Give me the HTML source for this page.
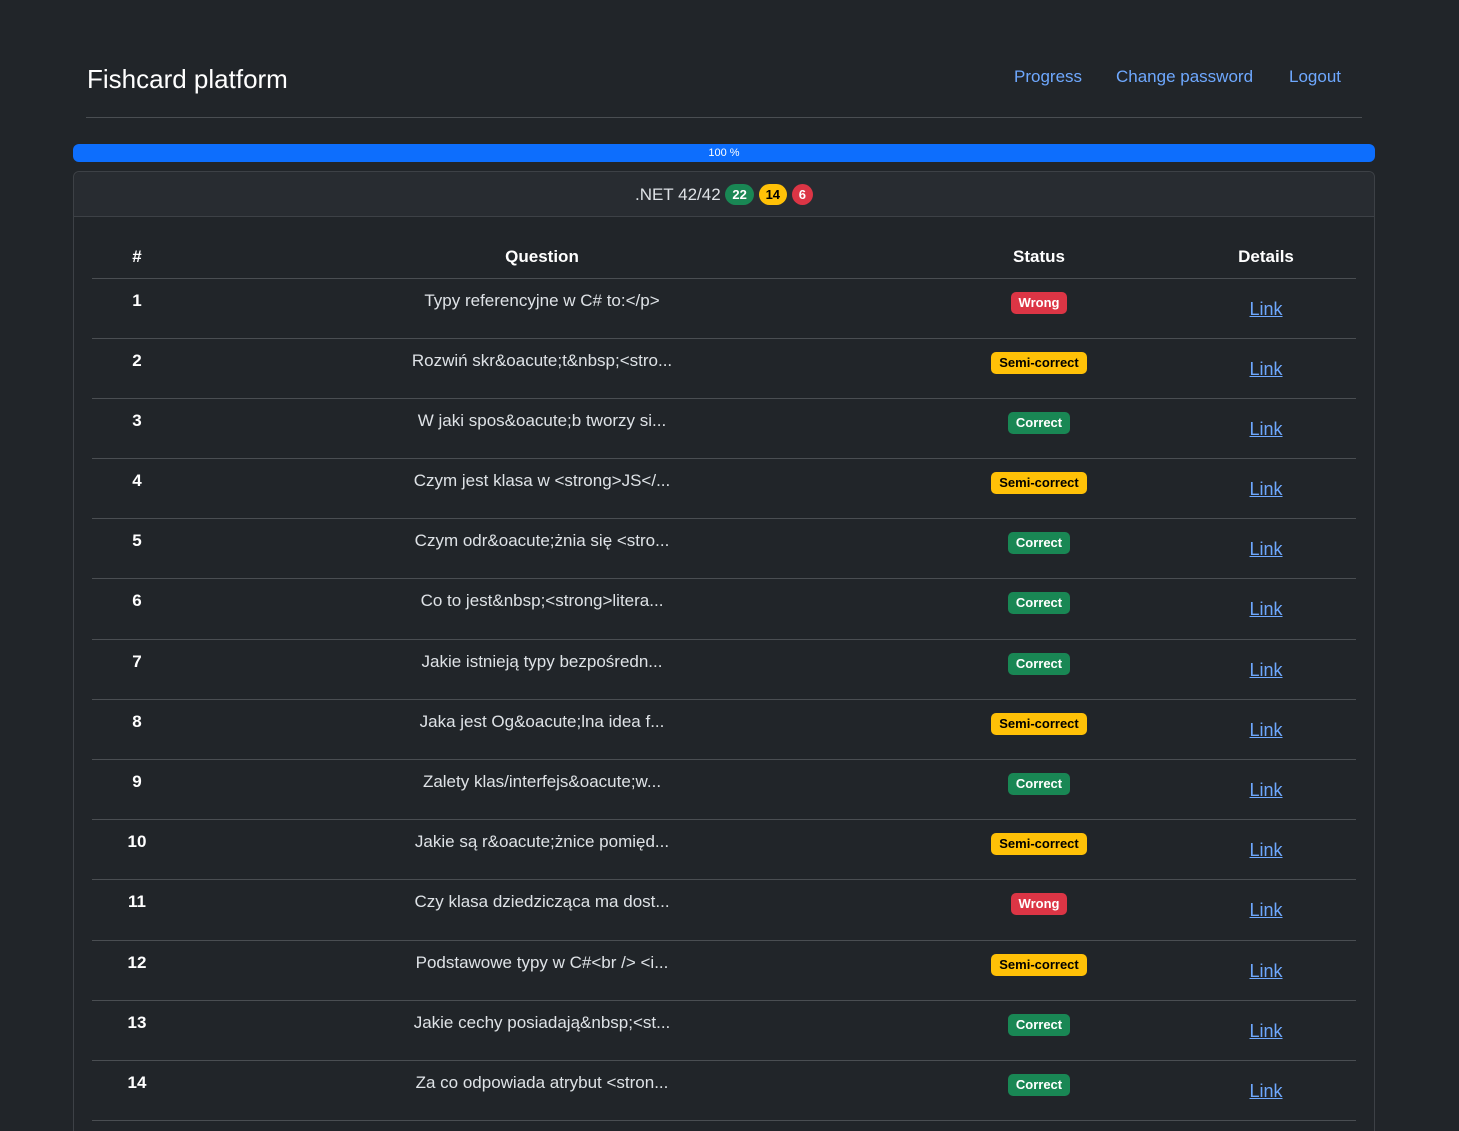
<!DOCTYPE html>
<html><head><meta charset="utf-8"><style>
*{box-sizing:border-box;margin:0;padding:0}
html,body{width:1459px;height:1131px;overflow:hidden}
body{background:#212529;color:#dee2e6;font-family:"Liberation Sans",sans-serif;position:relative}
.title{position:absolute;left:87px;top:64px;font-size:26px;color:#fff}
.nav a{position:absolute;top:67px;font-size:17px;color:#6ea8fe;text-decoration:none}
.hr{position:absolute;left:86px;width:1276px;top:117px;height:1px;background:#4a4e52}
.prog{position:absolute;left:73px;width:1302px;top:144px;height:18px;background:#0d6efd;border-radius:6px;color:#fff;font-size:11px;text-align:center;line-height:19px}
.card{position:absolute;left:73px;width:1302px;top:171px;height:1000px;border:1px solid #3d4146;border-radius:6px;background:#212529;overflow:hidden}
.ch{height:45px;background:#282c31;border-bottom:1px solid #3d4146;text-align:center;font-size:17px;line-height:46px;border-radius:6px 6px 0 0}
.b{display:inline-block;font-weight:bold;font-size:13px;border-radius:11px;padding:0 7px;line-height:21px;vertical-align:1px}
.g{background:#198754;color:#fff}.y{background:#ffc107;color:#000}.r{background:#dc3545;color:#fff}
table{position:absolute;left:18px;top:60px;width:1264px;border-collapse:collapse}
th{font-weight:bold;font-size:17px;color:#fff;height:46px;vertical-align:top;padding-top:15px;border-bottom:1px solid #4a4e52}
td{height:60.2px;border-bottom:1px solid #4a4e52;vertical-align:top;text-align:center;font-size:17px;padding-top:12px}
td.n{font-weight:bold;color:#fff}
td .s{display:inline-block;font-size:13px;font-weight:bold;border-radius:5px;padding:0 8px;line-height:22px;margin-top:1px}
td a{color:#6ea8fe;font-size:18px;display:inline-block;margin-top:8px;text-decoration:underline}
</style></head><body>
<div class="title">Fishcard platform</div>
<div class="nav"><a style="left:1014px">Progress</a><a style="left:1116px">Change password</a><a style="left:1289px">Logout</a></div>
<div class="hr"></div>
<div class="prog">100 %</div>
<div class="card">
<div class="ch">.NET 42/42 <span class="b g">22</span> <span class="b y">14</span> <span class="b r">6</span></div>
<table>
<colgroup><col style="width:90px"><col style="width:720px"><col style="width:274px"><col style="width:180px"></colgroup>
<tr><th>#</th><th>Question</th><th>Status</th><th>Details</th></tr>
<tr><td class="n">1</td><td>Typy referencyjne w C# to:&lt;/p&gt;</td><td><span class="s r">Wrong</span></td><td><a>Link</a></td></tr>
<tr><td class="n">2</td><td>Rozwiń skr&amp;oacute;t&amp;nbsp;&lt;stro...</td><td><span class="s y">Semi-correct</span></td><td><a>Link</a></td></tr>
<tr><td class="n">3</td><td>W jaki spos&amp;oacute;b tworzy si...</td><td><span class="s g">Correct</span></td><td><a>Link</a></td></tr>
<tr><td class="n">4</td><td>Czym jest klasa w &lt;strong&gt;JS&lt;/...</td><td><span class="s y">Semi-correct</span></td><td><a>Link</a></td></tr>
<tr><td class="n">5</td><td>Czym odr&amp;oacute;żnia się &lt;stro...</td><td><span class="s g">Correct</span></td><td><a>Link</a></td></tr>
<tr><td class="n">6</td><td>Co to jest&amp;nbsp;&lt;strong&gt;litera...</td><td><span class="s g">Correct</span></td><td><a>Link</a></td></tr>
<tr><td class="n">7</td><td>Jakie istnieją typy bezpośredn...</td><td><span class="s g">Correct</span></td><td><a>Link</a></td></tr>
<tr><td class="n">8</td><td>Jaka jest Og&amp;oacute;lna idea f...</td><td><span class="s y">Semi-correct</span></td><td><a>Link</a></td></tr>
<tr><td class="n">9</td><td>Zalety klas/interfejs&amp;oacute;w...</td><td><span class="s g">Correct</span></td><td><a>Link</a></td></tr>
<tr><td class="n">10</td><td>Jakie są r&amp;oacute;żnice pomięd...</td><td><span class="s y">Semi-correct</span></td><td><a>Link</a></td></tr>
<tr><td class="n">11</td><td>Czy klasa dziedzicząca ma dost...</td><td><span class="s r">Wrong</span></td><td><a>Link</a></td></tr>
<tr><td class="n">12</td><td>Podstawowe typy w C#&lt;br /&gt; &lt;i...</td><td><span class="s y">Semi-correct</span></td><td><a>Link</a></td></tr>
<tr><td class="n">13</td><td>Jakie cechy posiadają&amp;nbsp;&lt;st...</td><td><span class="s g">Correct</span></td><td><a>Link</a></td></tr>
<tr><td class="n">14</td><td>Za co odpowiada atrybut &lt;stron...</td><td><span class="s g">Correct</span></td><td><a>Link</a></td></tr>
</table>
</div>
</body></html>
